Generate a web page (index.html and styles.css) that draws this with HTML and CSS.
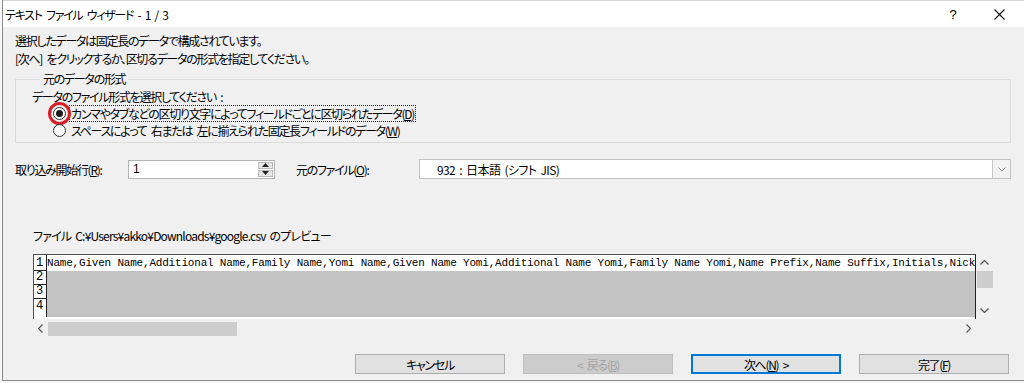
FILE: index.html
```html
<!DOCTYPE html>
<html lang="ja">
<head>
<meta charset="utf-8">
<title>テキスト ファイル ウィザード</title>
<link rel="stylesheet" href="styles.css">
</head>
<body>
<div class="screen">
  <div class="dialog">
    <header class="titlebar">
      <span class="title">テキスト ファイル ウィザード - 1 / 3</span>
      <div class="ctrls">
        <span class="ctrl help">?</span>
        <span class="ctrl close"><svg width="11" height="11" viewBox="0 0 11 11"><path d="M0.5 0.5 L10.5 10.5 M10.5 0.5 L0.5 10.5" stroke="#111" stroke-width="1.1" fill="none"/></svg></span>
      </div>
    </header>
    <main class="body">
      <p class="msg">選択したデータは固定長のデータで構成されています。</p>
      <p class="msg">[次へ] をクリックするか、区切るデータの形式を指定してください。</p>
      <fieldset class="group">
        <legend class="legend">元のデータの形式</legend>
        <div class="group-label">データのファイル形式を選択してください :</div>
        <div class="radio-row">
          <span class="radio checked"><span class="ring"></span></span>
          <span class="radio-text focus">カンマやタブなどの区切り文字によってフィールドごとに区切られたデータ(<u>D</u>)</span>
        </div>
        <div class="radio-row">
          <span class="radio"></span>
          <span class="radio-text">スペースによって 右または 左に揃えられた固定長フィールドのデータ(<u>W</u>)</span>
        </div>
      </fieldset>
      <div class="row">
        <span class="row-label">取り込み開始行(<u>R</u>):</span>
        <div class="spinner">
          <span class="spin-value">1</span>
          <div class="spin-btns">
            <span class="spin-btn"><svg width="7" height="4" viewBox="0 0 7 4"><path d="M0 4 L3.5 0 L7 4 Z" fill="#222"/></svg></span>
            <span class="spin-btn"><svg width="7" height="4" viewBox="0 0 7 4"><path d="M0 0 L3.5 4 L7 0 Z" fill="#222"/></svg></span>
          </div>
        </div>
        <span class="row-label origin">元のファイル(<u>O</u>):</span>
        <div class="combo">
          <span class="combo-value">932 : 日本語 (シフト JIS)</span>
          <span class="combo-btn"><svg width="8" height="5" viewBox="0 0 8 5"><path d="M0.5 0.5 L4 4 L7.5 0.5" stroke="#8a8a8a" stroke-width="1" fill="none"/></svg></span>
        </div>
      </div>
      <div class="preview-label">ファイル C:¥Users¥akko¥Downloads¥google.csv のプレビュー</div>
      <div class="preview">
        <div class="preview-top">
          <div class="grid">
            <div class="grow r1"><span class="num">1</span><span class="cell">Name,Given Name,Additional Name,Family Name,Yomi Name,Given Name Yomi,Additional Name Yomi,Family Name Yomi,Name Prefix,Name Suffix,Initials,Nick</span></div>
            <div class="grow r2"><span class="num">2</span><span class="cell gray"></span></div>
            <div class="grow r3"><span class="num">3</span><span class="cell gray"></span></div>
            <div class="grow r4"><span class="num">4</span><span class="cell gray"></span></div>
          </div>
          <div class="vscroll">
            <span class="arrow"><svg width="9" height="5" viewBox="0 0 9 5"><path d="M0.5 4.5 L4.5 0.5 L8.5 4.5" stroke="#555" stroke-width="1.2" fill="none"/></svg></span>
            <span class="vthumb"></span>
            <span class="vspace"></span>
            <span class="arrow"><svg width="9" height="5" viewBox="0 0 9 5"><path d="M0.5 0.5 L4.5 4.5 L8.5 0.5" stroke="#555" stroke-width="1.2" fill="none"/></svg></span>
          </div>
        </div>
        <div class="hscroll">
          <span class="harrow"><svg width="5" height="9" viewBox="0 0 5 9"><path d="M4.5 0.5 L0.5 4.5 L4.5 8.5" stroke="#555" stroke-width="1.2" fill="none"/></svg></span>
          <span class="hthumb"></span>
          <span class="hspace"></span>
          <span class="harrow"><svg width="5" height="9" viewBox="0 0 5 9"><path d="M0.5 0.5 L4.5 4.5 L0.5 8.5" stroke="#555" stroke-width="1.2" fill="none"/></svg></span>
          <span class="corner"></span>
        </div>
      </div>
      <div class="buttons">
        <span class="btn">キャンセル</span>
        <span class="btn disabled">&lt; 戻る(<u>B</u>)</span>
        <span class="btn default">次へ(<u>N</u>) &gt;</span>
        <span class="btn">完了(<u>F</u>)</span>
      </div>
    </main>
  </div>
</div>
</body>
</html>
```
FILE: styles.css
```css
* { box-sizing: border-box; }
html, body { margin: 0; padding: 0; }
body {
  font-family: "Noto Sans CJK JP", "Noto Sans", sans-serif;
  font-size: 12px;
  color: #000;
  font-feature-settings: "palt";
}
.screen {
  width: 1024px;
  height: 383px;
  background: #f7f7f7;
  padding-left: 2px;
  overflow: hidden;
}
.dialog {
  height: 381px;
  background: #f0f0f0;
  border-left: 1px solid #8a8a8a;
  border-bottom: 1px solid #8a8a8a;
  display: flex;
  flex-direction: column;
}
.titlebar {
  height: 27px;
  background: #fff;
  border-top: 1px solid #d8d8d8;
  display: flex;
  align-items: center;
  justify-content: space-between;
  padding-left: 2px;
  flex: none;
}
.title, .msg, .legend, .group-label, .radio-text, .row-label, .preview-label, .btn {
  letter-spacing: -1.3px;
  word-spacing: 3px;
}
.ctrls { display: flex; margin-right: 2px; height: 100%; }
.ctrl {
  width: 46px;
  display: flex;
  align-items: center;
  justify-content: center;
}
.help { font-family: "Liberation Sans", sans-serif; font-size: 13px; }
.body { padding: 5px 0 0 12px; flex: 1; }
.msg { margin: 0; line-height: 18px; }
.group {
  margin: 3px 0 0 0;
  width: 996px;
  border: 1px solid #dcdcdc;
  padding: 2px 0 3px 16px;
  min-width: 0;
}
.legend {
  margin-left: 8px;
  padding: 0 3px;
  line-height: 16px;
}
.group-label { line-height: 16px; }
.radio-row {
  display: flex;
  align-items: center;
  height: 17px;
  padding-left: 21px;
}
.radio {
  position: relative;
  width: 13px;
  height: 13px;
  border: 1px solid #333;
  border-radius: 50%;
  background: #fff;
  flex: none;
  margin-right: 4px;
}
.radio.checked::after {
  content: "";
  position: absolute;
  left: 2px; top: 2px;
  width: 7px; height: 7px;
  border-radius: 50%;
  background: #1a1a1a;
}
.ring {
  position: absolute;
  left: -6px; top: -6px;
  width: 23px; height: 23px;
  border: 3.5px solid #d61f26;
  border-radius: 50%;
}
.radio-text { line-height: 15px; padding: 0 1px; }
.radio-text.focus { outline: 1px dotted #222; outline-offset: 0; }
u { text-underline-offset: 1px; }
.row {
  display: flex;
  align-items: center;
  margin-top: 16px;
  height: 20px;
}
.row-label { width: 113px; }
.row-label.origin { width: 123px; margin-left: 21px; }
.spinner {
  width: 147px;
  height: 19px;
  border: 1px solid #b4b4b4;
  background: #fff;
  display: flex;
  align-items: center;
  justify-content: space-between;
}
.spin-value { padding-left: 4px; font-family: "Liberation Sans", sans-serif; }
.spin-btns { display: flex; flex-direction: column; height: 100%; width: 16px; gap: 1px; padding: 1px 1px 1px 0; }
.spin-btn {
  flex: 1;
  background: #e6e6e6;
  border: 1px solid #bcbcbc;
  display: flex;
  align-items: center;
  justify-content: center;
}
.combo {
  width: 592px;
  height: 20px;
  border: 1px solid #c2c2c2;
  background: #fff;
  display: flex;
  align-items: center;
  justify-content: space-between;
}
.combo-value { padding-left: 17px; letter-spacing: -0.6px; word-spacing: 2px; }
.combo-btn {
  width: 18px;
  height: 100%;
  border-left: 1px solid #c8c8c8;
  background: #f2f2f2;
  display: flex;
  align-items: center;
  justify-content: center;
}
.preview-label {
  margin: 48px 0 0 18px;
  line-height: 18px;
  letter-spacing: -0.8px;
  word-spacing: 2px;
}
.preview { margin: 9px 0 0 18px; width: 960px; }
.preview-top { display: flex; }
.grid {
  width: 943px;
  height: 65px;
  border-top: 1px solid #505050;
  border-left: 1px solid #505050;
  border-right: 1px solid #222;
  background: #fff;
  overflow: hidden;
  padding-bottom: 1px;
}
.grow { display: flex; font-family: "Liberation Mono", monospace; font-size: 11px; letter-spacing: -0.2px; }
.r1 { height: 16px; }
.r2, .r3 { height: 14px; }
.r4 { height: 18px; }
.num {
  width: 13px;
  flex: none;
  border-right: 1px solid #222;
  border-bottom: 1px solid #222;
  display: flex;
  align-items: flex-end;
  padding-left: 2px;
  line-height: 13px;
  font-size: 12px;
  background: #fff;
}
.r4 .num { border-bottom: none; align-items: flex-start; padding-top: 1px; }
.cell { flex: 1; white-space: nowrap; overflow: hidden; line-height: 16px; }
.cell.gray { background: #c3c3c3; }
.vscroll {
  width: 17px;
  height: 65px;
  display: flex;
  flex-direction: column;
  align-items: center;
}
.arrow { height: 17px; display: flex; align-items: center; justify-content: center; width: 100%; }
.vthumb { width: 16px; height: 17px; background: #cdcdcd; flex: none; }
.vspace { flex: 1; }
.hscroll { display: flex; align-items: center; height: 17px; margin-top: 1px; }
.harrow { width: 15px; display: flex; justify-content: center; height: 100%; align-items: center; }
.hthumb { width: 189px; height: 14px; background: #cdcdcd; }
.hspace { flex: 1; }
.corner { width: 17px; }
.buttons {
  display: flex;
  gap: 18px;
  margin-top: 17px;
  padding-left: 340px;
}
.btn {
  width: 150px;
  height: 20px;
  background: #e1e1e1;
  border: 1px solid #adadad;
  display: flex;
  align-items: center;
  justify-content: center;
}
.btn.disabled { background: #cccccc; border-color: #bfbfbf; color: #a3a3a3; }
.btn.default { border: 2px solid #0078d7; }
```
